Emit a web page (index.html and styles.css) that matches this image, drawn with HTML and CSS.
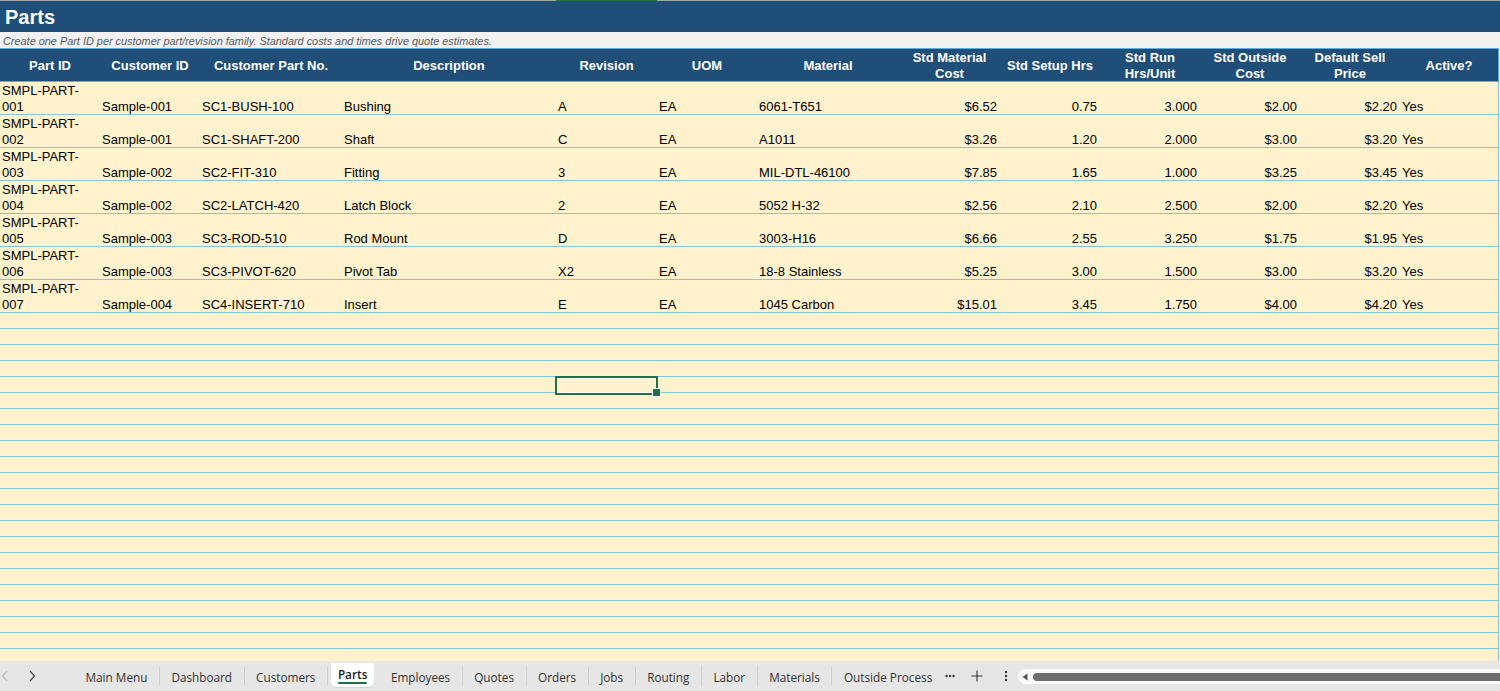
FILE: index.html
```html
<!DOCTYPE html>
<html>
<head>
<meta charset="utf-8">
<title>Parts</title>
<link rel="stylesheet" href="styles.css">
</head>
<body>
<div class="app">
  <div class="topline"><span class="colmark"></span></div>
  <div class="sheet">
    <div class="title">Parts</div>
    <div class="subtitle">Create one Part ID per customer part/revision family. Standard costs and times drive quote estimates.</div>
    <div class="grid hdr">
      <div class="h">Part ID</div>
      <div class="h">Customer ID</div>
      <div class="h">Customer Part No.</div>
      <div class="h">Description</div>
      <div class="h">Revision</div>
      <div class="h">UOM</div>
      <div class="h">Material</div>
      <div class="h">Std Material Cost</div>
      <div class="h">Std Setup Hrs</div>
      <div class="h">Std Run Hrs/Unit</div>
      <div class="h">Std Outside Cost</div>
      <div class="h">Default Sell Price</div>
      <div class="h">Active?</div>
    </div>

    <div class="grid drow">
      <div class="c">SMPL-PART-001</div><div class="c">Sample-001</div><div class="c">SC1-BUSH-100</div><div class="c">Bushing</div><div class="c">A</div><div class="c">EA</div><div class="c">6061-T651</div><div class="n">$6.52</div><div class="n">0.75</div><div class="n">3.000</div><div class="n">$2.00</div><div class="n">$2.20</div><div class="c">Yes</div>
    </div>
    <div class="grid drow">
      <div class="c">SMPL-PART-002</div><div class="c">Sample-001</div><div class="c">SC1-SHAFT-200</div><div class="c">Shaft</div><div class="c">C</div><div class="c">EA</div><div class="c">A1011</div><div class="n">$3.26</div><div class="n">1.20</div><div class="n">2.000</div><div class="n">$3.00</div><div class="n">$3.20</div><div class="c">Yes</div>
    </div>
    <div class="grid drow">
      <div class="c">SMPL-PART-003</div><div class="c">Sample-002</div><div class="c">SC2-FIT-310</div><div class="c">Fitting</div><div class="c">3</div><div class="c">EA</div><div class="c">MIL-DTL-46100</div><div class="n">$7.85</div><div class="n">1.65</div><div class="n">1.000</div><div class="n">$3.25</div><div class="n">$3.45</div><div class="c">Yes</div>
    </div>
    <div class="grid drow">
      <div class="c">SMPL-PART-004</div><div class="c">Sample-002</div><div class="c">SC2-LATCH-420</div><div class="c">Latch Block</div><div class="c">2</div><div class="c">EA</div><div class="c">5052 H-32</div><div class="n">$2.56</div><div class="n">2.10</div><div class="n">2.500</div><div class="n">$2.00</div><div class="n">$2.20</div><div class="c">Yes</div>
    </div>
    <div class="grid drow">
      <div class="c">SMPL-PART-005</div><div class="c">Sample-003</div><div class="c">SC3-ROD-510</div><div class="c">Rod Mount</div><div class="c">D</div><div class="c">EA</div><div class="c">3003-H16</div><div class="n">$6.66</div><div class="n">2.55</div><div class="n">3.250</div><div class="n">$1.75</div><div class="n">$1.95</div><div class="c">Yes</div>
    </div>
    <div class="grid drow">
      <div class="c">SMPL-PART-006</div><div class="c">Sample-003</div><div class="c">SC3-PIVOT-620</div><div class="c">Pivot Tab</div><div class="c">X2</div><div class="c">EA</div><div class="c">18-8 Stainless</div><div class="n">$5.25</div><div class="n">3.00</div><div class="n">1.500</div><div class="n">$3.00</div><div class="n">$3.20</div><div class="c">Yes</div>
    </div>
    <div class="grid drow">
      <div class="c">SMPL-PART-007</div><div class="c">Sample-004</div><div class="c">SC4-INSERT-710</div><div class="c">Insert</div><div class="c">E</div><div class="c">EA</div><div class="c">1045 Carbon</div><div class="n">$15.01</div><div class="n">3.45</div><div class="n">1.750</div><div class="n">$4.00</div><div class="n">$4.20</div><div class="c">Yes</div>
    </div>

    <div class="grid erow"></div>
    <div class="grid erow"></div>
    <div class="grid erow"></div>
    <div class="grid erow"></div>
    <div class="grid erow"><div class="sel"></div></div>
    <div class="grid erow"></div>
    <div class="grid erow"></div>
    <div class="grid erow"></div>
    <div class="grid erow"></div>
    <div class="grid erow"></div>
    <div class="grid erow"></div>
    <div class="grid erow"></div>
    <div class="grid erow"></div>
    <div class="grid erow"></div>
    <div class="grid erow"></div>
    <div class="grid erow"></div>
    <div class="grid erow"></div>
    <div class="grid erow"></div>
    <div class="grid erow"></div>
    <div class="grid erow"></div>
    <div class="grid erow"></div>
    <div class="grid erow"></div>
    <div class="grid erow"></div>
  </div>

  <div class="tabbar">
    <div class="nav">
      <svg class="chev dis" width="8" height="12" viewBox="0 0 8 12"><path d="M6 1 L1.5 6 L6 11" fill="none" stroke="currentColor" stroke-width="1.2"/></svg>
      <svg class="chev" width="8" height="12" viewBox="0 0 8 12"><path d="M2 1 L6.5 6 L2 11" fill="none" stroke="currentColor" stroke-width="1.2"/></svg>
    </div>
    <div class="tabs">
      <span class="tab">Main Menu</span><span class="sep"></span>
      <span class="tab">Dashboard</span><span class="sep"></span>
      <span class="tab">Customers</span><span class="sep"></span>
      <span class="tab active"><span class="lbl">Parts</span></span><span class="sep hide"></span>
      <span class="tab">Employees</span><span class="sep"></span>
      <span class="tab">Quotes</span><span class="sep"></span>
      <span class="tab">Orders</span><span class="sep"></span>
      <span class="tab">Jobs</span><span class="sep"></span>
      <span class="tab">Routing</span><span class="sep"></span>
      <span class="tab">Labor</span><span class="sep"></span>
      <span class="tab">Materials</span><span class="sep"></span>
      <span class="tab">Outside Process</span>
    </div>
    <div class="tools">
      <svg class="more" width="10" height="4" viewBox="0 0 10 4"><circle cx="1.5" cy="2" r="1.2"/><circle cx="5" cy="2" r="1.2"/><circle cx="8.5" cy="2" r="1.2"/></svg>
      <svg class="plus" width="12" height="12" viewBox="0 0 12 12"><path d="M6 0.5 V11.5 M0.5 6 H11.5" stroke="currentColor" stroke-width="1.1" fill="none"/></svg>
      <svg class="kebab" width="4" height="12" viewBox="0 0 4 12"><circle cx="2" cy="2" r="1.2"/><circle cx="2" cy="6" r="1.2"/><circle cx="2" cy="10" r="1.2"/></svg>
    </div>
    <div class="hscroll">
      <svg class="larr" width="6" height="8" viewBox="0 0 6 8"><path d="M5.5 0.5 L0.5 4 L5.5 7.5 Z"/></svg>
      <div class="thumb"></div>
    </div>
  </div>
</div>
</body>
</html>
```

FILE: styles.css
```css
* { box-sizing: border-box; }
html, body { margin: 0; padding: 0; }
body {
  background: #FFF2CC;
  font-family: "Liberation Sans", Arial, sans-serif;
  font-size: 13px;
  color: #000;
  overflow: hidden;
}
.app {
  height: 691px;
  display: flex;
  flex-direction: column;
}
.topline {
  height: 1px;
  background: #A6A6A6;
  padding-left: 556px;
  display: flex;
  flex: none;
}
.colmark {
  width: 101px;
  height: 1px;
  background: #217346;
}
.sheet {
  flex: 1;
  overflow: hidden;
  min-height: 0;
}
.title {
  height: 31px;
  line-height: 33px;
  background: #1F4E79;
  color: #fff;
  font-weight: bold;
  font-size: 20px;
  padding-left: 5px;
}
.subtitle {
  height: 16px;
  line-height: 18px;
  background: #F2F2F2;
  color: #595959;
  font-style: italic;
  font-size: 10.9px;
  padding-left: 3px;
  white-space: nowrap;
  overflow: hidden;
}
.grid {
  display: grid;
  grid-template-columns: 100px 100px 142px 214px 101px 100px 142px 101px 100px 100px 100px 100px 98px;
  width: 1499px;
  border-right: 1px solid #7CC8DA;
}
.hdr {
  height: 34px;
  background: #1F4E79;
  border-top: 1px solid #5BAEE0;
  border-bottom: 1px solid #5BAEE0;
  border-right-color: #5BAEE0;
}
.h {
  color: #fff;
  font-weight: bold;
  font-size: 13px;
  line-height: 16px;
  display: flex;
  align-items: center;
  justify-content: center;
  text-align: center;
  padding: 1px 2px 0;
}
.drow {
  height: 33px;
  border-bottom: 1px solid #80C8D9;
}
.drow > div {
  display: flex;
  align-items: flex-end;
  line-height: 16px;
  margin-bottom: -1px;
  overflow: hidden;
}
.c {
  padding-left: 2px;
}
.n {
  justify-content: flex-end;
  padding-right: 3px;
}
.erow {
  height: 16px;
  border-bottom: 1px solid #80C8D9;
}
.sel {
  grid-column: 5;
  position: relative;
}
.sel::after {
  content: "";
  position: absolute;
  left: -1px;
  top: -1px;
  right: -1px;
  bottom: -3px;
  border: 2px solid #217346;
  box-shadow: inset 0 0 0 1px #fff;
}
.sel::before {
  content: "";
  position: absolute;
  right: -4px;
  bottom: -5px;
  width: 7px;
  height: 7px;
  background: #217346;
  border: 1px solid #fff;
  z-index: 2;
}
.tabbar {
  height: 30px;
  flex: none;
  background: #E6E6E6;
  display: flex;
  align-items: center;
  font-family: "Open Sans", "Noto Sans", sans-serif;
  font-size: 11.75px;
  color: #333;
}
.nav {
  width: 74px;
  display: flex;
  align-items: center;
  padding-left: 1px;
  gap: 19px;
  flex: none;
}
.chev { color: #444; }
.chev.dis { color: #B8B8B8; }
.tabs {
  display: flex;
  align-items: center;
  height: 30px;
}
.tab {
  padding: 1px 11.5px 0;
  white-space: nowrap;
  height: 30px;
  display: flex;
  align-items: center;
}
.sep {
  width: 1px;
  height: 18px;
  background: #CFCFCF;
}
.sep.hide { background: transparent; }
.tab.active {
  padding: 0;
  margin: 0 4px 0 3px;
}
.tab.active .lbl {
  background: #fff;
  height: 24px;
  line-height: 22px;
  margin-top: -3px;
  padding: 0 7px;
  border-radius: 0 0 5px 5px;
  color: #1a1a1a;
  font-weight: 600;
  position: relative;
  box-shadow: 0 1px 1px rgba(0,0,0,0.08);
}
.tab.active .lbl::after {
  content: "";
  position: absolute;
  left: 7px;
  right: 7px;
  bottom: 3px;
  height: 2px;
  border-radius: 1px;
  background: #1E7145;
}
.tools {
  display: flex;
  align-items: center;
  padding-left: 1.5px;
  flex: none;
  color: #333;
}
.more { fill: #333; }
.plus { margin-left: 16px; color: #333; }
.kebab { fill: #333; margin-left: 21px; }
.hscroll {
  flex: 1;
  margin-left: 10px;
  height: 15px;
  background: #FAFAFA;
  border-radius: 8px 0 0 8px;
  display: flex;
  align-items: center;
  padding-left: 4px;
  margin-top: 1px;
}
.larr { fill: #555; flex: none; }
.thumb {
  flex: 1;
  margin-left: 5px;
  height: 8px;
  background: #6E6E6E;
  border-radius: 4px 0 0 4px;
}
```
